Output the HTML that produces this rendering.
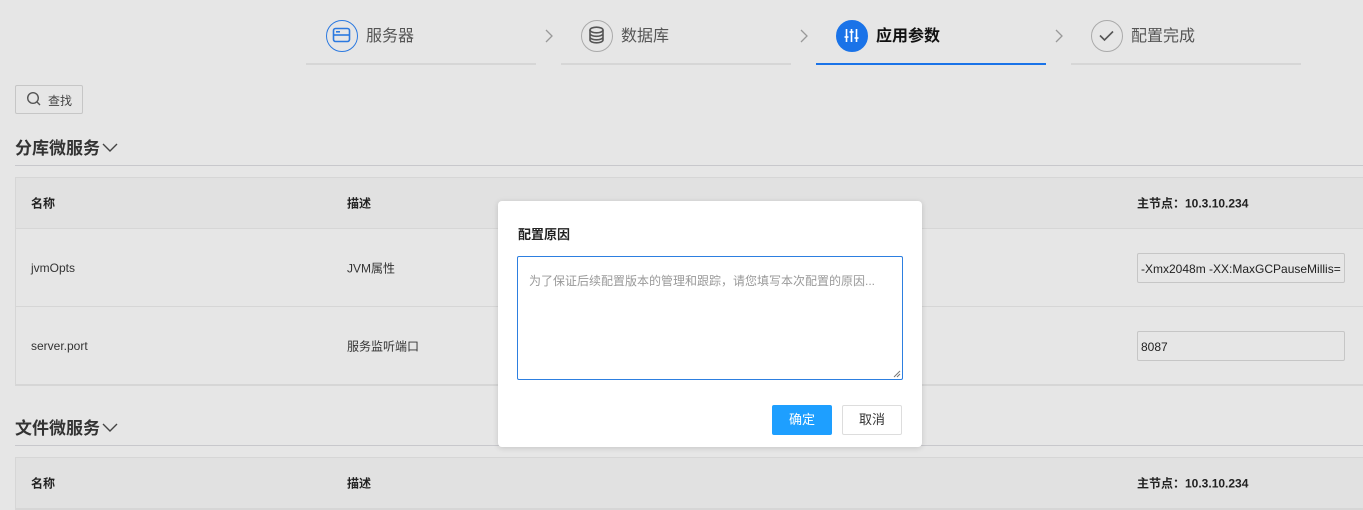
<!DOCTYPE html>
<html><head><meta charset="utf-8"><style>
*{box-sizing:border-box;margin:0;padding:0}
body{width:1363px;height:501px;overflow:hidden;background:#e6e6e6;font-family:"Liberation Sans","Noto Sans CJK SC",sans-serif;position:relative;color:#333}
.a{position:absolute}
.step{position:absolute;top:0;height:65px;width:230px;border-bottom:1px solid #d3d3d3}
.step .c{position:absolute;left:20px;top:20px;width:32px;height:32px;border-radius:50%;border:1.5px solid #aaa}
.step .t{position:absolute;left:60px;top:22px;font-size:16px;color:#555}
.chev{position:absolute;top:29px}
.tbl{position:absolute;left:15px;right:0;border:1px solid #d6d6d6;border-right:none}
.hd{height:51px;background:#e1e1e1;border-bottom:1px solid #d6d6d6;position:relative;font-size:12px;font-weight:bold;color:#222}
.row{height:78px;border-bottom:1px solid #d6d6d6;position:relative;font-size:12px;color:#333}
.cell{position:absolute;top:50%;transform:translateY(-50%)}
.inp{position:absolute;left:1121px;width:208px;height:30px;top:24px;border:1px solid #c6c6c6;border-radius:2px;font-size:12px;padding:8px 3px;white-space:nowrap;overflow:hidden;color:#222}
h2{position:absolute;left:15px;font-size:17px;font-weight:bold;color:#333}
h2 svg{vertical-align:middle;margin-left:2px;margin-top:-3px}
</style></head><body>
<div class="step" style="left:306px;border-bottom-width:2px;border-bottom-color:#d6d6d6"><div class="c" style="border-color:#2b79e0"><svg width="29" height="29" viewBox="0 0 29 29"><rect x="6.5" y="7.5" width="16" height="13" rx="2" fill="none" stroke="#2b79e0" stroke-width="1.6"/><line x1="6.5" y1="14" x2="22.5" y2="14" stroke="#2b79e0" stroke-width="1.6"/><line x1="9" y1="10.8" x2="13" y2="10.8" stroke="#2b79e0" stroke-width="1.6"/></svg></div><div class="t">服务器</div></div>
<svg class="chev" style="left:544px" width="10" height="14"><path d="M2 1l6 6-6 6" fill="none" stroke="#999" stroke-width="1.3"/></svg>
<div class="step" style="left:561px;border-bottom-width:2px;border-bottom-color:#d6d6d6"><div class="c"><svg width="29" height="29" viewBox="0 0 29 29" fill="none" stroke="#555" stroke-width="1.6"><ellipse cx="14.5" cy="9" rx="6.5" ry="2.8"/><path d="M8 9v10c0 1.5 2.9 2.8 6.5 2.8s6.5-1.3 6.5-2.8V9M8 12.5c0 1.5 2.9 2.8 6.5 2.8s6.5-1.3 6.5-2.8M8 16c0 1.5 2.9 2.8 6.5 2.8s6.5-1.3 6.5-2.8"/></svg></div><div class="t">数据库</div></div>
<svg class="chev" style="left:799px" width="10" height="14"><path d="M2 1l6 6-6 6" fill="none" stroke="#999" stroke-width="1.3"/></svg>
<div class="step" style="left:816px;border-bottom:2px solid #1a73e8"><div class="c" style="background:#1a73e8;border-color:#1a73e8"><svg width="29" height="29" viewBox="0 0 29 29" stroke="#fff" stroke-width="1.6"><line x1="9.5" y1="8" x2="9.5" y2="21"/><line x1="14.5" y1="8" x2="14.5" y2="21"/><line x1="19.5" y1="8" x2="19.5" y2="21"/><line x1="7.5" y1="16" x2="11.5" y2="16"/><line x1="12.5" y1="11" x2="16.5" y2="11"/><line x1="17.5" y1="17" x2="21.5" y2="17"/></svg></div><div class="t" style="color:#111;font-weight:bold">应用参数</div></div>
<svg class="chev" style="left:1054px" width="10" height="14"><path d="M2 1l6 6-6 6" fill="none" stroke="#999" stroke-width="1.3"/></svg>
<div class="step" style="left:1071px;border-bottom-width:2px;border-bottom-color:#d6d6d6"><div class="c"><svg width="29" height="29" viewBox="0 0 29 29"><path d="M8 14.5l4.5 4.5 8.5-8.5" fill="none" stroke="#555" stroke-width="1.6"/></svg></div><div class="t">配置完成</div></div>

<div class="a" style="left:15px;top:85px;width:68px;height:29px;border:1px solid #c6c6c6;border-radius:2px"><svg class="a" style="left:10px;top:5px" width="16" height="16" viewBox="0 0 16 16" fill="none" stroke="#555" stroke-width="1.4"><circle cx="7" cy="7" r="5.3"/><line x1="10.8" y1="10.8" x2="14" y2="14"/></svg><span class="a" style="left:32px;top:6px;font-size:12px;color:#444">查找</span></div>

<h2 style="top:134px">分库微服务<svg width="16" height="10"><path d="M1 1l7 7 7-7" fill="none" stroke="#444" stroke-width="1.4"/></svg></h2>
<div class="a" style="left:15px;right:0;top:165px;border-top:1px solid #c8c8cc"></div>
<div class="tbl" style="top:177px">
<div class="hd"><span class="cell" style="left:15px">名称</span><span class="cell" style="left:331px">描述</span><span class="cell" style="left:1121px">主节点：10.3.10.234</span></div>
<div class="row"><span class="cell" style="left:15px">jvmOpts</span><span class="cell" style="left:331px">JVM属性</span><div class="inp">-Xmx2048m -XX:MaxGCPauseMillis=</div></div>
<div class="row"><span class="cell" style="left:15px">server.port</span><span class="cell" style="left:331px">服务监听端口</span><div class="inp">8087</div></div>
</div>

<h2 style="top:414px">文件微服务<svg width="16" height="10"><path d="M1 1l7 7 7-7" fill="none" stroke="#444" stroke-width="1.4"/></svg></h2>
<div class="a" style="left:15px;right:0;top:445px;border-top:1px solid #c8c8cc"></div>
<div class="tbl" style="top:457px">
<div class="hd"><span class="cell" style="left:15px">名称</span><span class="cell" style="left:331px">描述</span><span class="cell" style="left:1121px">主节点：10.3.10.234</span></div>
</div>

<div class="a" style="left:498px;top:201px;width:424px;height:246px;background:#fff;border-radius:4px;box-shadow:0 1px 6px rgba(0,0,0,.15)">
<div class="a" style="left:20px;top:23px;font-size:13px;font-weight:bold;color:#222">配置原因</div>
<div class="a" style="left:19px;top:55px;width:386px;height:124px;border:1px solid #2d7fe0;border-radius:2px"><span class="a" style="left:11px;top:15px;font-size:12px;color:#999">为了保证后续配置版本的管理和跟踪，请您填写本次配置的原因...</span><svg class="a" style="right:1px;bottom:1px" width="9" height="9"><path d="M8 2L2 8M8 5L5 8" stroke="#777"/></svg></div>
<div class="a" style="left:274px;top:204px;width:60px;height:30px;background:#1e9fff;border-radius:2px;color:#fff;font-size:13px;text-align:center;line-height:30px">确定</div>
<div class="a" style="left:344px;top:204px;width:60px;height:30px;border:1px solid #ddd;border-radius:2px;color:#333;font-size:13px;text-align:center;line-height:28px">取消</div>
</div>
</body></html>
